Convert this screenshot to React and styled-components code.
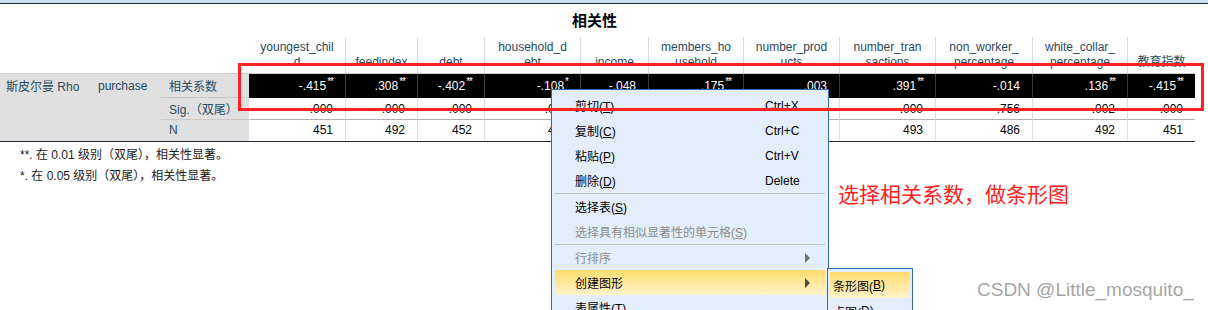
import React from 'react';
import styled, { createGlobalStyle } from 'styled-components';

const GlobalStyle = createGlobalStyle`
  html, body {
    margin: 0;
    padding: 0;
    background: #ffffff;
  }
  body {
    font-family: "Liberation Sans", Arial, "Noto Sans CJK SC", sans-serif;
    overflow: hidden;
  }
`;

const COLS = '92px 69px 88px 96px 72px 67px 96px 68px 95px 96px 96px 97px 95px 68px';

const headers = [
  ['youngest_chil', 'd'],
  ['feedindex'],
  ['debt'],
  ['household_d', 'ebt'],
  ['income'],
  ['members_ho', 'usehold'],
  ['number_prod', 'ucts'],
  ['number_tran', 'sactions'],
  ['non_worker_', 'percentage'],
  ['white_collar_', 'percentage'],
  ['教育指数'],
];

const rows = [
  {
    stub: ['斯皮尔曼 Rho', 'purchase', '相关系数'],
    dark: true,
    height: 24,
    values: [
      ['-.415', '**'], ['.308', '**'], ['-.402', '**'], ['-.108', '*'], ['-.048'],
      ['.175', '**'], ['.003'], ['.391', '**'], ['-.014'], ['.136', '**'], ['-.415', '**'],
    ],
  },
  {
    stub: ['', '', 'Sig.（双尾）'],
    height: 22,
    rule: true,
    values: [
      ['.000'], ['.000'], ['.000'], ['.017'], ['.289'], ['.000'], ['.948'], ['.000'], ['.756'], ['.002'], ['.000'],
    ],
  },
  {
    stub: ['', '', 'N'],
    height: 21,
    values: [
      ['451'], ['492'], ['452'], ['485'], ['488'], ['492'], ['493'], ['493'], ['486'], ['492'], ['451'],
    ],
  },
];

const menuItems = [
  { label: '剪切', key: 'T', shortcut: 'Ctrl+X' },
  { label: '复制', key: 'C', shortcut: 'Ctrl+C' },
  { label: '粘贴', key: 'P', shortcut: 'Ctrl+V' },
  { label: '删除', key: 'D', shortcut: 'Delete' },
  { sep: true },
  { label: '选择表', key: 'S' },
  { label: '选择具有相似显著性的单元格', key: 'S', disabled: true },
  { sep: true },
  { label: '行排序', disabled: true, arrow: true },
  { label: '创建图形', active: true, arrow: true },
  { label: '表属性', key: 'T', suffix: '...' },
];

const App = () => {
  return (
    <Page>
      <GlobalStyle />
      <TopStrip />
      <Title>相关性</Title>
      <Table>
        <HeadRow>
          <div />
          <div />
          <div />
          {headers.map((lines, i) => (
            <HeadCell key={i} $first={i === 0}>
              <span>
                {lines.map((l, j) => (
                  <React.Fragment key={j}>
                    {j > 0 && <br />}
                    {l}
                  </React.Fragment>
                ))}
              </span>
            </HeadCell>
          ))}
        </HeadRow>
        <Body>
          {rows.map((row, ri) => (
            <BodyRow key={ri} $height={row.height}>
              <Stub>{row.stub[0]}</Stub>
              <Stub $pad={6}>{row.stub[1]}</Stub>
              <Stub $pad={8} $rule={ri < 2}>{row.stub[2]}</Stub>
              {row.values.map(([v, s], ci) => (
                <DataCell key={ci} $dark={row.dark} $rule={row.rule} $first={ci === 0}>
                  {v}
                  {s && <Sup>{s}</Sup>}
                </DataCell>
              ))}
            </BodyRow>
          ))}
        </Body>
      </Table>
      <Notes>
        <Note>**. 在 0.01 级别（双尾），相关性显著。</Note>
        <Note>*. 在 0.05 级别（双尾），相关性显著。</Note>
      </Notes>

      <SelectBox />

      <Menu>
        {menuItems.map((item, i) =>
          item.sep ? (
            <Sep key={i} />
          ) : (
            <Item key={i} $disabled={item.disabled} $active={item.active}>
              <span>
                {item.label}
                {item.key && (
                  <>
                    (<Key>{item.key}</Key>)
                  </>
                )}
                {item.suffix}
              </span>
              <span>{item.shortcut}</span>
              <span>{item.arrow && <Arrow $disabled={item.disabled} />}</span>
            </Item>
          )
        )}
      </Menu>

      <SubMenu>
        <SubItem $active>
          条形图(<Key>B</Key>)
        </SubItem>
        <SubItem>
          点图(<Key>D</Key>)
        </SubItem>
      </SubMenu>

      <Annotation>选择相关系数，做条形图</Annotation>
      <Watermark>CSDN @Little_mosquito_</Watermark>
    </Page>
  );
};

const Page = styled.div`
  position: relative;
  width: 1208px;
  height: 310px;
  overflow: hidden;
  display: flex;
  flex-direction: column;
`;

const TopStrip = styled.div`
  height: 3px;
  background: #c9dbef;
  border-bottom: 1px solid #1c2630;
`;

const Title = styled.div`
  width: 1189px;
  height: 33px;
  padding-top: 8px;
  box-sizing: border-box;
  text-align: center;
  font-size: 15px;
  line-height: 16px;
  font-weight: bold;
  color: #010205;
  font-family: "Noto Sans CJK SC", sans-serif;
`;

const Table = styled.div`
  width: 1195px;
  border-bottom: 1px solid #1d2a36;
`;

const HeadRow = styled.div`
  display: grid;
  grid-template-columns: ${COLS};
  height: 36px;
`;

const HeadCell = styled.div`
  display: flex;
  align-items: flex-end;
  justify-content: center;
  padding-bottom: 3px;
  box-sizing: border-box;
  border-left: ${(p) => (p.$first ? 'none' : '1px solid #dadada')};
  text-align: center;
  font-size: 12px;
  line-height: 15px;
  color: #264a60;
  white-space: nowrap;
`;

const Body = styled.div`
  border-top: 1px solid #d2ccc6;
`;

const BodyRow = styled.div`
  display: grid;
  grid-template-columns: ${COLS};
  height: ${(p) => p.$height}px;
`;

const Stub = styled.div`
  display: flex;
  align-items: center;
  box-sizing: border-box;
  padding-left: ${(p) => p.$pad ?? 6}px;
  background: #e0e0e0;
  border-bottom: 1px solid ${(p) => (p.$rule ? '#c9c9c9' : '#e0e0e0')};
  font-size: 12px;
  color: #264a60;
  white-space: nowrap;
`;

const DataCell = styled.div`
  display: flex;
  align-items: center;
  justify-content: flex-end;
  box-sizing: border-box;
  padding-right: 12px;
  background: ${(p) => (p.$dark ? '#000000' : '#ffffff')};
  color: ${(p) => (p.$dark ? '#ffffff' : '#010205')};
  border-left: 1px solid ${(p) => (p.$first ? 'transparent' : p.$dark ? '#3c3c3c' : '#dedede')};
  border-bottom: 1px solid ${(p) => (p.$rule ? '#b0b0b0' : p.$dark ? '#000000' : '#ffffff')};
  font-size: 12px;
  white-space: nowrap;
`;

const Sup = styled.span`
  align-self: flex-start;
  margin-top: 3px;
  margin-left: 1px;
  font-size: 10px;
  line-height: 10px;
  letter-spacing: -1px;
`;

const Notes = styled.div`
  padding: 3px 0 0 20px;
`;

const Note = styled.div`
  font-size: 12px;
  line-height: 21px;
  color: #1a1a1a;
`;

const SelectBox = styled.div`
  position: absolute;
  left: 238px;
  top: 63px;
  width: 966px;
  height: 48px;
  box-sizing: border-box;
  border: 3px solid #ff2222;
  z-index: 5;
`;

const Menu = styled.div`
  position: absolute;
  left: 551px;
  top: 89px;
  width: 278px;
  box-sizing: border-box;
  padding: 3px 2px;
  background: #e4eefa;
  border: 1px solid #2f6cb2;
  z-index: 3;
`;

const Item = styled.div`
  display: grid;
  grid-template-columns: 190px 40px 1fr;
  align-items: center;
  height: 25px;
  padding-left: 20px;
  margin: 0 1px;
  font-size: 12px;
  white-space: nowrap;
  color: ${(p) => (p.$disabled ? '#8d8d8d' : '#000000')};
  background: ${(p) => (p.$active ? 'linear-gradient(#ffdc6c, #fff3cc)' : 'transparent')};
`;

const Key = styled.span`
  text-decoration: underline;
`;

const Arrow = styled.span`
  display: block;
  width: 0;
  height: 0;
  border-top: 5px solid transparent;
  border-bottom: 5px solid transparent;
  border-left: 5px solid ${(p) => (p.$disabled ? '#6f6f6f' : '#4a4a4a')};
`;

const Sep = styled.div`
  height: 1px;
  margin: 0 1px;
  background: #c4c4c4;
`;

const SubMenu = styled.div`
  position: absolute;
  left: 827px;
  top: 268px;
  width: 86px;
  box-sizing: border-box;
  padding: 3px 2px;
  background: #e4eefa;
  border: 1px solid #2f6cb2;
  z-index: 4;
`;

const SubItem = styled.div`
  height: 26px;
  display: flex;
  align-items: center;
  padding-left: 3px;
  font-size: 12px;
  color: #000000;
  white-space: nowrap;
  background: ${(p) => (p.$active ? 'linear-gradient(#ffdc6c, #fff3cc)' : 'transparent')};
`;

const Annotation = styled.div`
  position: absolute;
  left: 838px;
  top: 179px;
  font-family: "Noto Sans CJK SC", sans-serif;
  font-size: 21px;
  line-height: 28px;
  color: #ff2020;
  white-space: nowrap;
`;

const Watermark = styled.div`
  position: absolute;
  left: 977px;
  top: 278px;
  font-size: 19px;
  line-height: 24px;
  color: #a6a6a6;
  white-space: nowrap;
  z-index: 6;
`;

export default App;
